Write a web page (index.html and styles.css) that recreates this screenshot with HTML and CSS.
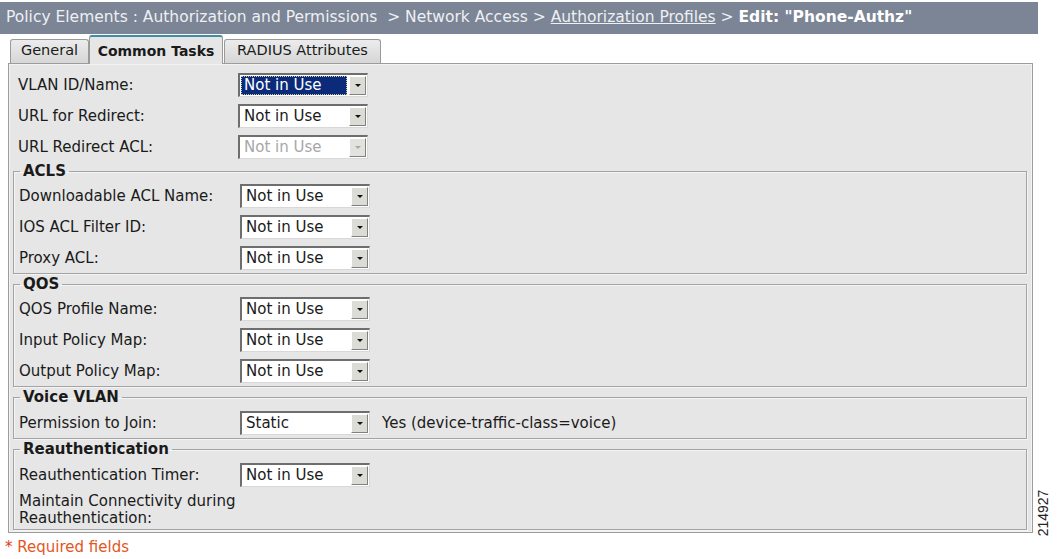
FILE: index.html
```html
<!DOCTYPE html>
<html>
<head>
<meta charset="utf-8">
<title>Edit: Phone-Authz</title>
<link rel="stylesheet" href="styles.css">
</head>
<body>
<div class="header">
  <span>Policy Elements : Authorization and Permissions&nbsp; &gt; Network Access &gt; </span><a class="crumb-link" href="#">Authorization Profiles</a><span> &gt; </span><b class="crumb-current">Edit: "Phone-Authz"</b>
</div>
<div class="tabs">
  <div class="tab tab-general">General</div>
  <div class="tab tab-active">Common Tasks</div>
  <div class="tab tab-radius">RADIUS Attributes</div>
</div>
<div class="panel">
  <div class="row top">
    <span class="label">VLAN ID/Name:</span>
    <div class="select"><span class="value selected">Not in Use</span><span class="btn"><i class="arrow"></i></span></div>
  </div>
  <div class="row top">
    <span class="label">URL for Redirect:</span>
    <div class="select"><span class="value">Not in Use</span><span class="btn"><i class="arrow"></i></span></div>
  </div>
  <div class="row top">
    <span class="label">URL Redirect ACL:</span>
    <div class="select disabled"><span class="value">Not in Use</span><span class="btn"><i class="arrow"></i></span></div>
  </div>

  <fieldset class="group">
    <legend>ACLS</legend>
    <div class="row">
      <span class="label">Downloadable ACL Name:</span>
      <div class="select"><span class="value">Not in Use</span><span class="btn"><i class="arrow"></i></span></div>
    </div>
    <div class="row">
      <span class="label">IOS ACL Filter ID:</span>
      <div class="select"><span class="value">Not in Use</span><span class="btn"><i class="arrow"></i></span></div>
    </div>
    <div class="row">
      <span class="label">Proxy ACL:</span>
      <div class="select"><span class="value">Not in Use</span><span class="btn"><i class="arrow"></i></span></div>
    </div>
  </fieldset>

  <fieldset class="group">
    <legend>QOS</legend>
    <div class="row">
      <span class="label">QOS Profile Name:</span>
      <div class="select"><span class="value">Not in Use</span><span class="btn"><i class="arrow"></i></span></div>
    </div>
    <div class="row">
      <span class="label">Input Policy Map:</span>
      <div class="select"><span class="value">Not in Use</span><span class="btn"><i class="arrow"></i></span></div>
    </div>
    <div class="row">
      <span class="label">Output Policy Map:</span>
      <div class="select"><span class="value">Not in Use</span><span class="btn"><i class="arrow"></i></span></div>
    </div>
  </fieldset>

  <fieldset class="group spaced">
    <legend>Voice VLAN</legend>
    <div class="row">
      <span class="label">Permission to Join:</span>
      <div class="select"><span class="value">Static</span><span class="btn"><i class="arrow"></i></span></div>
      <span class="note">Yes (device-traffic-class=voice)</span>
    </div>
  </fieldset>

  <fieldset class="group spaced last">
    <legend>Reauthentication</legend>
    <div class="row">
      <span class="label">Reauthentication Timer:</span>
      <div class="select"><span class="value">Not in Use</span><span class="btn"><i class="arrow"></i></span></div>
    </div>
    <div class="row multi">
      <span class="label">Maintain Connectivity during<br>Reauthentication:</span>
    </div>
  </fieldset>
</div>
<div class="required"><span class="star">*</span> Required fields</div>
<div class="fig-number">214927</div>
</body>
</html>
```

FILE: styles.css
```css
html, body {
  margin: 0;
  padding: 0;
  background: #ffffff;
}
body {
  font-family: "DejaVu Sans", Verdana, sans-serif;
  font-size: 15px;
  color: #1a1a1a;
  position: relative;
  width: 1058px;
  height: 559px;
  overflow: hidden;
}

.header {
  margin-top: 2px;
  width: 1032px;
  height: 32px;
  padding-left: 6px;
  background: #7b8595;
  color: #eef0f3;
  font-size: 15.5px;
  line-height: 30px;
  white-space: nowrap;
}
.crumb-link {
  color: #eef0f3;
  text-decoration: underline;
}
.crumb-current {
  font-weight: bold;
  color: #ffffff;
}

.tabs {
  display: flex;
  align-items: flex-end;
  padding-left: 10px;
  margin-top: 2px;
  height: 27px;
  position: relative;
  z-index: 2;
}
.tab {
  box-sizing: border-box;
  height: 24px;
  border: 1px solid #9a9a9a;
  border-bottom: none;
  border-radius: 3px 3px 0 0;
  background: linear-gradient(#ececec, #d6d6d6);
  font-size: 14.5px;
  line-height: 20px;
  text-align: center;
  color: #1a1a1a;
  white-space: nowrap;
}
.tab-general { width: 79px; }
.tab-radius { width: 157px; margin-left: 1px; }
.tab-active {
  width: 134px;
  background: #e6e6e6;
  border-top: 2px solid #3d8ea6;
  font-weight: bold;
  font-size: 14px;
  line-height: 28px;
  margin-bottom: -1px;
  height: 29px;
}

.panel {
  box-sizing: border-box;
  margin-left: 8px;
  width: 1025px;
  height: 470px;
  background: #e6e6e6;
  border: 1px solid #9c9c9c;
  box-shadow: inset 0 0 0 1px #f3f3f3;
  padding: 5px 4px 0 4px;
}

.row {
  display: flex;
  align-items: center;
  height: 31px;
}
.label {
  padding-left: 5px;
  width: 221px;
  flex: none;
  white-space: nowrap;
}
.row.top .label { width: 220px; }

.select {
  box-sizing: border-box;
  width: 130px;
  height: 24px;
  flex: none;
  display: flex;
  align-items: stretch;
  background: #ffffff;
  border-top: 2px solid #6e6e6e;
  border-left: 2px solid #6e6e6e;
  border-right: 1px solid #d8d8d8;
  border-bottom: 1px solid #d8d8d8;
  padding: 1px;
}
.value {
  flex: 1;
  padding-left: 3px;
  line-height: 19px;
  font-size: 15px;
  white-space: nowrap;
  overflow: hidden;
}
.value.selected {
  background: #0b2b7a;
  color: #ffffff;
  outline: 1px dotted #c8c8a0;
  outline-offset: -1px;
  margin-right: 2px;
}
.btn {
  box-sizing: border-box;
  width: 17px;
  flex: none;
  background: #dcdcd6;
  border-top: 1px solid #ffffff;
  border-left: 1px solid #ffffff;
  border-right: 1px solid #808080;
  border-bottom: 1px solid #808080;
  display: flex;
  align-items: center;
  justify-content: center;
}
.arrow {
  width: 0;
  height: 0;
  border-left: 3px solid transparent;
  border-right: 3px solid transparent;
  border-top: 3px solid #111;
  margin-top: 1px;
}
.select.disabled .value { color: #a8a8a8; }
.select.disabled .btn { background: #e2e2de; }
.select.disabled .arrow { border-top-color: #a8a8a8; }

.note {
  margin-left: 12px;
  white-space: nowrap;
}

.group {
  margin: 1px 1px 0 0;
  padding: 1px 0 0 0;
  border: 1px solid #a4a4a4;
  box-shadow: inset 1px 1px 0 #f4f4f4, 1px 1px 0 #f4f4f4;
  min-width: 0;
}
.group + .group { margin-top: 2px; }
.group.spaced { padding-top: 2px; }
.group legend {
  font-weight: bold;
  font-size: 15px;
  padding: 0 3px;
  margin-left: 6px;
  line-height: 16px;
}
.group.last { padding-bottom: 2px; }
.row.multi {
  height: auto;
  line-height: 17px;
  padding-top: 3px;
}

.required {
  margin-top: 5px;
  padding-left: 5px;
  color: #e4561e;
  font-size: 15px;
}
.required .star { color: #e23a1a; }

.fig-number {
  position: absolute;
  left: 1035px;
  top: 505px;
  font-family: "Liberation Sans", Arial, sans-serif;
  font-size: 14px;
  color: #222;
  transform: rotate(-90deg);
  transform-origin: center;
  width: 52px;
  text-align: center;
  margin-left: -18px;
}
```
